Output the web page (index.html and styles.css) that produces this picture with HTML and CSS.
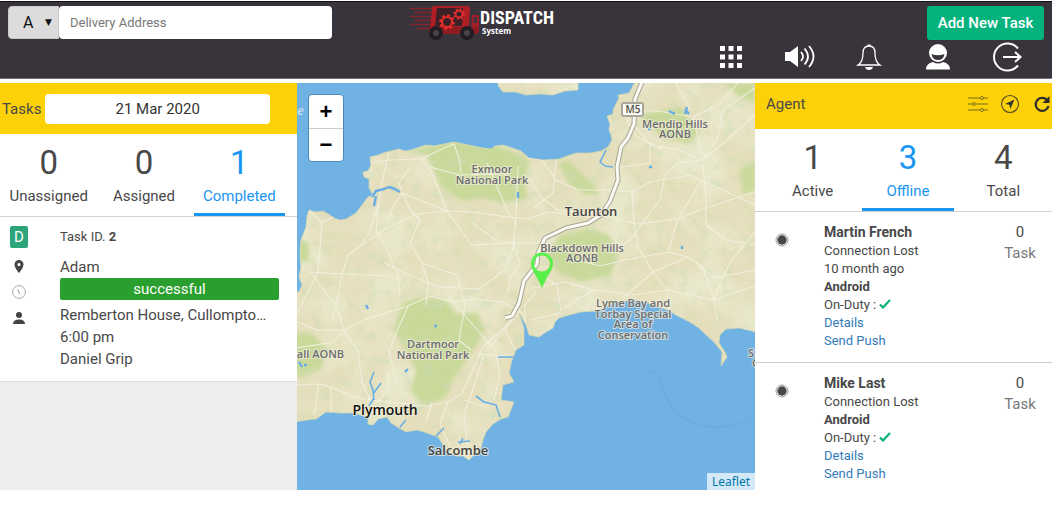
FILE: index.html
```html
<!DOCTYPE html>
<html lang="en">
<head>
<meta charset="utf-8">
<title>Dispatch System</title>
<meta name="viewport" content="width=device-width, initial-scale=1">
<link rel="stylesheet" href="styles.css">
</head>
<body>
<header class="topbar">
  <form class="search">
    <select class="search-kind" aria-label="Search by"><option>A</option><option>B</option></select>
    <input class="search-box" type="text" placeholder="Delivery Address" aria-label="Delivery Address">
  </form>
  <svg class="logo" viewBox="0 0 154 38" role="img" aria-label="Dispatch System">
    <g stroke="#9a2028" stroke-width="1.300">
      <path d="M5 2.500H27M9 6.500H27M5 10.500H27M10 14.500H26M5 18.500H25M12 22.500H24" opacity=".75"/>
    </g>
    <path d="M29 0h33q3 0 3 3l-1 17q0 3-3 3H25l2-20q0-3 2-3z" fill="#b01e25"/>
    <path d="M32 2h26l-1 18H30z" fill="#3a2227"/>
    <path d="M67 9h5q2 0 2 3v14h-8z" fill="#a51e25"/>
    <path d="M69 11h3v6h-4z" fill="#3a333b"/>
    <path d="M24 21h50l-1 7H24z" fill="#8d1b22"/>
    <g fill="none" stroke="#ee2e2b">
      <circle cx="42" cy="16" r="5" stroke-width="2"/>
      <circle cx="42" cy="16" r="6.800" stroke-width="2" stroke-dasharray="2.670 2.670"/>
      <circle cx="54" cy="8" r="3.400" stroke-width="1.700"/>
      <circle cx="54" cy="8" r="4.900" stroke-width="1.600" stroke-dasharray="1.920 1.920"/>
    </g>
    <g fill="#4b4548" stroke="#211d22" stroke-width="4">
      <circle cx="31" cy="27" r="5"/><circle cx="62" cy="27" r="5"/>
    </g>
    <text class="logo-name" x="75" y="18">DISPATCH</text>
    <text class="logo-sub" x="77" y="28">System</text>
  </svg>
  <div class="actions">
    <button class="add" type="button">Add New Task</button>
    <nav class="tools" aria-label="Tools">
      <button type="button" aria-label="Menu"><svg viewBox="0 0 30 30"><path fill="#fff" d="M4 4h5v5H4zm8.500 0h5v5h-5zM21 4h5v5h-5zM4 12.500h5v5H4zm8.500 0h5v5h-5zm8.500 0h5v5h-5zM4 21h5v5H4zm8.500 0h5v5h-5zm8.500 0h5v5h-5z"/></svg></button>
      <button type="button" aria-label="Sound"><svg viewBox="0 0 30 30"><path fill="#fff" d="M0 10h5l8-6v21l-8-6H0z"/><g fill="none" stroke="#fff" stroke-width="1.800"><path d="M16 10q4 4.500 0 9M19.500 6.500q7 8 0 16M24 4q9 10.500 0 21"/></g></svg></button>
      <button type="button" aria-label="Notifications"><svg viewBox="0 0 30 30"><path d="M4 23q5-3 5-12 0-7 6-7t6 7q0 9 5 12z" fill="none" stroke="#fff" stroke-width="1.300"/><path d="M11 25h8q-1 3-4 3t-4-3zM13.500 2.500h3v2h-3z" fill="#fff"/></svg></button>
      <button type="button" aria-label="Profile"><svg viewBox="0 0 30 30"><circle cx="15" cy="11" r="9" fill="#fff"/><path d="M8.500 12q6.500 2.500 13 0-1 6-6.500 6t-6.500-6z" fill="#39333b"/><path d="M3 27.500q0-6 7-7.500 5 3 10 0 7 1.500 7 7.500z" fill="#fff"/></svg></button>
      <button type="button" aria-label="Log out"><svg viewBox="0 0 30 30"><g fill="none" stroke="#fff" stroke-width="2"><path d="M26 6.500A13.500 13.500 0 1 0 26 23.500"/><path d="M11 15h17M23 10l5.500 5-5.500 5"/></g></svg></button>
    </nav>
  </div>
</header>
<main class="board">
  <section class="panel tasks">
    <div class="bar bar-tasks">
      <label for="day">Tasks</label>
      <input id="day" class="day" type="text" value="21 Mar 2020">
    </div>
    <div class="tabs tabs-tasks">
      <button class="tab" type="button"><span class="count">0</span>Unassigned</button>
      <button class="tab" type="button"><span class="count">0</span>Assigned</button>
      <button class="tab active" type="button"><span class="count">1</span>Completed</button>
    </div>
    <article class="task">
      <div class="marks">
        <span class="badge">D</span>
        <svg viewBox="0 0 16 16"><path fill="#444" fill-rule="evenodd" d="M8 2a4.500 4.500 0 0 0-4.500 4.500C3.500 10 8 15 8 15s4.500-5 4.500-8.500A4.500 4.500 0 0 0 8 2zm0 3a1.600 1.600 0 1 1 0 3.200A1.600 1.600 0 0 1 8 5z"/></svg>
        <svg viewBox="0 0 16 16"><circle cx="8" cy="8" r="6.400" fill="none" stroke="#aaa"/><path d="M7 5.500l1.500 4.500" stroke="#999"/></svg>
        <svg viewBox="0 0 16 16"><circle cx="8" cy="5" r="3" fill="#444"/><path d="M2 14q0-4.500 6-4.500T14 14z" fill="#444"/></svg>
      </div>
      <div class="details">
        <p class="task-id">Task ID. <b>2</b></p>
        <p>Adam</p>
        <p class="status">successful</p>
        <p>Remberton House, Cullompto…</p>
        <p>6:00 pm</p>
        <p>Daniel Grip</p>
      </div>
    </article>
  </section>
  <section class="map" aria-label="Map">
    <svg class="map-art" viewBox="297 83 458 407" preserveAspectRatio="xMidYMid slice">
      <defs>
        <path id="coast" d="M290 290L299 292 302 285 299 277 301 267 300 255 301 240 306 227 307 216 309 210 316 212 323 211 330 215 334 218 340 220 346 219 356 213 362 205 368 197 373 195 369 188 369 179 364 177 363 172 368 171 371 165 370 157 378 155 386 152 399 149 405 151 411 150 426 145 434 146 444 144 454 142 463 144 483 148 492 149 495 146 503 145 512 148 521 151 529 158 543 160 559 159 567 156 576 153 590 153 601 151 608 147 612 140 611 135 609 130 610 124 607 116 613 114 613 110 619 98 618 95 629 93 636 80H760V333L748 330 739 328 726 329 720 335 719 343 725 352 727 357 721 366 722 352 714 342 706 335 700 329 693 324 684 319 676 315 668 310 659 307 648 303 636 300 616 302 604 308 594 311 581 312 569 315 559 318 555 322 553 328 546 332 539 337 529 335 526 325 519 313 524 328 524 345 516 350 512 360 509 373 514 382 503 385 501 400 508 401 514 402 508 417 501 419 493 424 486 432 483 440 481 448 475 454 469 460 463 456 456 456 447 451 443 445 438 437 424 432 417 430 406 432 399 428 391 423 387 417 378 419 373 425 368 424 368 417 353 413 340 413 326 412 316 419 307 420 290 423zM497 80L499 87 503 92 515 92 526 95 540 94 553 95 565 91 578 90V80z"/>
        <clipPath id="land"><use href="#coast"/></clipPath>
        <filter id="woods" x="0" y="0" width="100%" height="100%">
          <feTurbulence type="fractalNoise" baseFrequency=".09" numOctaves="4" seed="8"/>
          <feColorMatrix values="0 0 0 0 .62  0 0 0 0 .72  0 0 0 0 .46  3.500 0 0 0 -1.800"/>
        </filter>
        <filter id="soil" x="0" y="0" width="100%" height="100%">
          <feTurbulence type="fractalNoise" baseFrequency=".022" numOctaves="3" seed="3"/>
          <feColorMatrix values="0 0 0 0 .84  0 0 0 0 .86  0 0 0 0 .68  3 0 0 0 -1.200"/>
        </filter>
        <filter id="soft"><feGaussianBlur stdDeviation="2"/></filter>
      </defs>
      <rect x="290" y="80" width="470" height="420" fill="#71b2e5"/>
      <path d="M650 371q8 1 11 13c8 28 28 43 56 43q21 0 38-9" fill="none" stroke="#6bacdf" stroke-width="1.500"/>
      <use href="#coast" fill="#e6dfbd" stroke="#c9d3b3" stroke-width=".8"/>
      <g clip-path="url(#land)">
        <rect x="290" y="80" width="470" height="420" filter="url(#soil)" opacity=".6"/>
        <g fill="#c9d99a" filter="url(#soft)">
          <path d="M405 150l50-9 45 5 30 13-5 20 3 20-25 4-20-5-22 3-20-15-14-31z"/>
          <path d="M402 303l18-6 25 3 12 14 20-2 8 18-12 20-20 30-8 18-20 8-15-15 6-20-12-25-10-15z"/>
          <path d="M290 331l22 3 15 15-6 20-20 8-11-3z"/>
          <path d="M560 235l30-7 20 8 8 20-8 20-30 6-22-10-12-17z"/>
          <path d="M558 163l10-3 26 25 6 10-14 0-16-10z"/>
          <path d="M640 115l40-8 20 25-10 12-30-8z"/>
          <path d="M740 170l15-10v30l-12 5zM725 83h30v20l-15-6zM297 240l12 2 0 20-10 0z"/>
        </g>
        <rect x="290" y="80" width="470" height="420" filter="url(#woods)" opacity=".5"/>
        <g fill="none" stroke="#f4f0e1" stroke-width="1.100" stroke-linejoin="round" opacity=".9">
          <path d="M369 163l20-3 32-1 21-10 12-5 5 14 2 15M421 159l10 12 9 22 7 18 26 1 35 5 20 2 20-7 26 2M430 167l30 8 50-1M389 152l-6 26-2 10-3 22-2 20 10 18 12 27 2 20M402 193l45 18-30 3-32 15-37 26-6 20-5 26-5 20M402 193l-10 16-4 12M409 168l-10 15 3 10 8 17 10 10-10 23 12 20 6 20-2 22M378 205l-9 29-8 10M309 272l35 2 43 2M309 211l13 11-4 50-20 40M322 222l15-6"/>
          <path d="M447 211l25 34 41-2 3-27 2-50M472 223l25 18 18 2-10 27-26 19-40-2-30-12-25-12M422 263l35 12 8 30-6 35 12 10M513 243l30 0M513 243l7 20-10 15-2 15M487 163l20 47 10 15M297 322l20 8 27 0 20-10 44-14 22-10 24 6 20-3 28 3 22 12M344 330l-8-25-15-18-10-15M344 330l-10 12-38 6M344 330l14 22 4 30 8 18M408 306l-19 44 7 30M297 385l22-1 12 3 22 10 25 4 50 5 20-4 14-8 8-18 14-30 20-18 15-16M319 384l-5 30M331 387l0 26M378 401l10-10 0-20M448 296l25 29 22 25 5 25-6 25M432 402l-6 20M448 402l-8 22 10 22M478 354l40 3M484 354l-12 38-8 22 4 34M464 400l20 6M520 310l-15 20-20 22M505 330l10 20"/>
          <path d="M526 158l16 2 14 20 22 10 27 0M530 178l10 18 18 14 45 6M556 160l-3 33-20 16M605 190l27 2 18-10 40-7 65 30M632 192l2 30 4 25M650 145l0 18-34 5M650 145l30 5 22 10 25-20 28-25M650 145l-22-28M702 160l15-20 6-30 32-22M702 160l4 35 0 30 20 15 29 5M665 175l12-12 25-3M665 175l-5 25-30 40-20 13M603 216l35 8 40-5 30-12 47-15M640 111l18 0 35 6 25-12 20-22M690 110l-14-27M693 117l10 40M638 247l15 25 15 20 0 18M668 252l20 5 15 10 10 30 5 25M713 300l-45-10-35 5-40-5-28-8-32 6M713 300l42-14M688 257l-35 15-27 24M668 252l10-33 24-40M593 290l-32 20M561 310l-4-25-25-15M537 290l-12 15 0 18M530 320l30-7M755 232l-25 30-17 38M755 270l-40 8-18-13M625 117l12 20 25 12M570 258l30 8 25-6 43-8"/>
        </g>
        <g fill="none" stroke="#67aee4" stroke-width="2.400" stroke-linejoin="round">
          <path d="M372 197l4-6 8-2 5-2 6 2 5 3M376 196l-2 10"/>
          <path d="M374 400l-1-10-3-8 4-10M373 394l8-11M374 398l-5 8M400 427l6-7M436 436l8-8M460 444l3-6M458 442l12-1M476 396l8 6 12 3 4 12M498 357l16 0M606 150l-6 12 5 4 8 1" stroke-width="1.600"/>
          <path d="M366 305l2 4M669 111l6 3M685 109l4 5M687 107l-2 7M518 192v6M648 129h3M649 167h3M682 246v3M405 372l3-3M434 326h3M299 362l3 5M304 365h3" stroke-width="2.400"/>
        </g>
      </g>
      <g fill="none" stroke-linejoin="round">
        <g stroke="#a8a695" stroke-width="5"><path id="m5" d="M643 80l-8 19-1 25-6 14-7 9-4 20 1 13-8 21-9 14-13 8-22 5-21 10-7 15-1 11-13 17-5 22-7 13-7 2"/></g>
        <use href="#m5" stroke="#fbfaf5" stroke-width="3"/>
      </g>
      <rect x="622" y="103" width="21" height="13" rx="2" fill="#fff" stroke="#aaa69a" stroke-width="2"/>
      <g class="place" text-anchor="middle">
        <text x="633" y="113" class="road">M5</text>
        <text x="675" y="128">Mendip Hills</text><text x="675" y="138">AONB</text>
        <text x="492" y="173">Exmoor</text><text x="492" y="184">National Park</text>
        <text x="582" y="252">Blackdown Hills</text><text x="582" y="262">AONB</text>
        <text x="433" y="348">Dartmoor</text><text x="433" y="359">National Park</text>
        <text x="633" y="307">Lyme Bay and</text><text x="633" y="318">Torbay Special</text><text x="633" y="328">Area of</text><text x="633" y="339">Conservation</text>
        <text x="344" y="358" text-anchor="end">all AONB</text>
        <text x="748" y="357" text-anchor="start">S</text><text x="752" y="367" text-anchor="start">C</text>
        <text x="591" y="216" class="town">Taunton</text>
        <text x="458" y="455" class="town small">Salcombe</text>
        <text x="385" y="415" class="town city">Plymouth</text>
        <text x="297" y="115" text-anchor="start" class="sea">e</text>
      </g>
      <path fill="#5af04b" fill-rule="evenodd" d="M542 252.500a11 11 0 0 0-11 11c0 7 6 12 11 24.500 5-12.500 11-17.500 11-24.500a11 11 0 0 0-11-11zm0 3a8 8 0 1 1 0 16 8 8 0 0 1 0-16z"/>
    </svg>
    <div class="zoom">
      <button type="button" aria-label="Zoom in">+</button>
      <button type="button" aria-label="Zoom out">−</button>
    </div>
    <a class="credit" href="#">Leaflet</a>
  </section>
  <section class="panel agents">
    <div class="bar bar-agents">
      <h2>Agent</h2>
      <button type="button" aria-label="Filter"><svg viewBox="0 0 20 20"><g fill="none" stroke="#7d6d18"><path d="M0 4h12M16 4h4M0 10h4M8 10h12M0 16h12M16 16h4"/><circle cx="14" cy="4" r="1.500"/><circle cx="6" cy="10" r="1.500"/><circle cx="14" cy="16" r="1.500"/></g></svg></button>
      <button type="button" aria-label="Locate"><svg viewBox="0 0 20 20"><circle cx="10" cy="10" r="8.500" fill="none" stroke="#4d4720" stroke-width="1.100"/><path d="M14.500 5.500L5 10l4.500.8.8 4.200z" fill="#333"/></svg></button>
      <button type="button" aria-label="Refresh"><svg viewBox="0 0 20 20"><path d="M15 6A6.500 6.500 0 1 0 16.500 12" fill="none" stroke="#2d2b2c" stroke-width="2.200"/><path d="M17.500 2v7h-7z" fill="#2d2b2c"/></svg></button>
    </div>
    <div class="tabs tabs-agents">
      <button class="tab" type="button"><span class="count">1</span>Active</button>
      <button class="tab active" type="button"><span class="count">3</span>Offline</button>
      <button class="tab" type="button"><span class="count">4</span>Total</button>
    </div>
    <article class="agent">
      <svg class="dot" viewBox="0 0 14 14"><circle cx="7" cy="7" r="6" fill="#fff" stroke="#999"/><circle cx="7" cy="7" r="4.700" fill="#484848"/></svg>
      <div class="info">
        <h3>Martin French</h3>
        <p>Connection Lost</p>
        <p>10 month ago</p>
        <p><b>Android</b></p>
        <p>On-Duty : <svg class="tick" viewBox="0 0 12 10"><path d="M1 5.500l3 3L11 1" fill="none" stroke="#0bb07b" stroke-width="2.200"/></svg></p>
        <p><a href="#">Details</a></p>
        <p><a href="#">Send Push</a></p>
      </div>
      <p class="load"><span>0</span>Task</p>
    </article>
    <article class="agent">
      <svg class="dot" viewBox="0 0 14 14"><circle cx="7" cy="7" r="6" fill="#fff" stroke="#999"/><circle cx="7" cy="7" r="4.700" fill="#484848"/></svg>
      <div class="info">
        <h3>Mike Last</h3>
        <p>Connection Lost</p>
        <p><b>Android</b></p>
        <p>On-Duty : <svg class="tick" viewBox="0 0 12 10"><path d="M1 5.500l3 3L11 1" fill="none" stroke="#0bb07b" stroke-width="2.200"/></svg></p>
        <p><a href="#">Details</a></p>
        <p><a href="#">Send Push</a></p>
      </div>
      <p class="load"><span>0</span>Task</p>
    </article>
  </section>
</main>
</body>
</html>
```

FILE: styles.css
```css
* { box-sizing: border-box; }
body { margin: 0; background: #fff; color: #484848; font: 15px/22px Roboto, sans-serif; }
h2, h3, p { margin: 0; font-weight: 400; }
b { font-weight: 700; }
button, input, select { font-family: inherit; }
button { border: 0; padding: 0; background: none; color: inherit; }
svg { display: block; }
a { text-decoration: none; }

.topbar {
  display: grid;
  grid-template-columns: 9fr 154px 11fr;
  align-items: start;
  margin-top: 1px;
  padding: 4px 8px 6px;
  border-top: 1px solid #111;
  border-bottom: 1px solid #77737a;
  background: #39333b;
}
.search { display: flex; position: relative; }
.search-kind {
  appearance: none;
  width: 51px;
  height: 33px;
  padding: 0 14px;
  border: 1px solid #c9c9c9;
  border-radius: 4px 0 0 4px;
  background: #dcdcdc;
  color: #111;
  font-size: 16px;
}
.search::before {
  content: "▼";
  position: absolute;
  left: 37px;
  top: 5px;
  color: #111;
  font: 9px/22px "DejaVu Sans", sans-serif;
  pointer-events: none;
}
.search-box {
  width: 273px;
  height: 33px;
  padding: 0 11px;
  border: 0;
  border-radius: 4px;
  background: #fff;
  font-size: 13px;
}
.search-box::placeholder { color: #777; }
.logo { width: 154px; height: 38px; }
.logo-name { fill: #fff; font: 700 18px "Roboto Condensed", "Liberation Sans Narrow", Roboto, sans-serif; }
.logo-sub { fill: #fff; font: 700 8px "Open Sans", sans-serif; }
.actions { display: flex; flex-direction: column; align-items: flex-end; gap: 2px; }
.add { width: 117px; height: 34px; border-radius: 3px; background: #04b27d; color: #fff; font-size: 15px; font-weight: 500; }
.tools { display: flex; gap: 39px; margin-right: 22px; }
.tools svg { width: 30px; height: 30px; }

.board { display: grid; grid-template-columns: 297fr 458fr 297fr; margin-top: 4px; }
.panel { min-width: 0; }
.tasks { background: #ededed; }
.agents { background: #fff; }
.bar { display: flex; align-items: center; background: #fcd108; font-size: 15px; }
.bar-tasks { gap: 4px; height: 51px; padding: 0 27px 0 2px; }
.day { flex: 1; min-width: 0; height: 30px; border: 0; border-radius: 4px; background: #fff; color: #333; font-size: 15px; text-align: center; }
.bar-agents { gap: 12px; height: 46px; padding: 0 0 4px 11px; }
.bar-agents h2 { flex: 1; font-size: 15px; }
.bar-agents svg { width: 20px; height: 20px; }

.tabs { display: grid; border-bottom: 1px solid #d2d2d2; background: #fff; }
.tabs-tasks { grid-template-columns: repeat(3, 1fr); padding: 0 10px 0 1px; }
.tabs-agents { grid-template-columns: repeat(3, 1fr); padding: 0 1px 0 10px; }
.tab { margin: 0 2px; padding: 9px 0 5px; border-bottom: 3px solid transparent; font-size: 15px; line-height: 24px; }
.tab.active { border-color: #1b95f2; color: #1b95f2; }
.count { display: block; margin-bottom: 1px; font-size: 33px; line-height: 40px; }

.task { display: flex; padding: 9px 18px 11px 10px; border-bottom: 1px solid #dedede; background: #fff; }
.marks { display: flex; flex-direction: column; align-items: center; gap: 10px; width: 18px; margin-right: 32px; }
.marks svg { width: 16px; height: 16px; }
.badge { width: 18px; height: 22px; border-radius: 2px; background: #2ca57b; color: #fff; text-align: center; }
.details { flex: 1; min-width: 0; font-size: 15px; }
.task-id { margin-bottom: 8px; font-size: 13px; }
.status { margin-bottom: 4px; border-radius: 2px; background: #2b9f2d; color: #fff; text-align: center; }

.map { position: relative; overflow: hidden; background: #71b2e5; }
.map-art { position: absolute; inset: 0; width: 100%; height: 100%; }
.place { fill: #6b6b70; stroke: #f3f0dc; stroke-width: 2px; stroke-opacity: .7; stroke-linejoin: round; paint-order: stroke; font: 600 11px "Open Sans", sans-serif; }
.place .road { fill: #555; font-size: 10px; }
.place .town { fill: #444; font-size: 13px; }
.place .small { font-size: 13px; }
.place .city { fill: #111; font-size: 14px; }
.place .sea { fill: #c5def4; stroke: none; font-size: 13px; font-style: italic; }
.zoom { position: absolute; left: 11px; top: 11px; overflow: hidden; border: 1px solid #4e87b5; border-radius: 4px; background: #fff; }
.zoom button { display: block; width: 34px; height: 33px; color: #000; font: 700 22px/30px "Liberation Sans", sans-serif; }
.zoom button + button { border-top: 1px solid #ccc; }
.credit { position: absolute; right: 0; bottom: 0; padding: 0 5px; background: #d4e8f8; color: #0078a8; font: 12px/17px "Noto Sans", sans-serif; }

.agent { display: flex; align-items: flex-start; padding: 10px 14px 12px 20px; }
.agent + .agent { padding-bottom: 7px; border-top: 1px solid #ccc; }
.dot { width: 14px; height: 14px; margin: 11px 35px 0 0; }
.info { flex: 1; font-size: 13px; line-height: 18px; }
.info h3 { font-size: 14px; line-height: 20px; font-weight: 700; }
.info a { color: #337ab7; }
.tick { display: inline-block; width: 12px; height: 10px; }
.load { width: 36px; color: #777; font-size: 15px; text-align: center; }
.load span { display: block; color: #484848; line-height: 20px; }
```
